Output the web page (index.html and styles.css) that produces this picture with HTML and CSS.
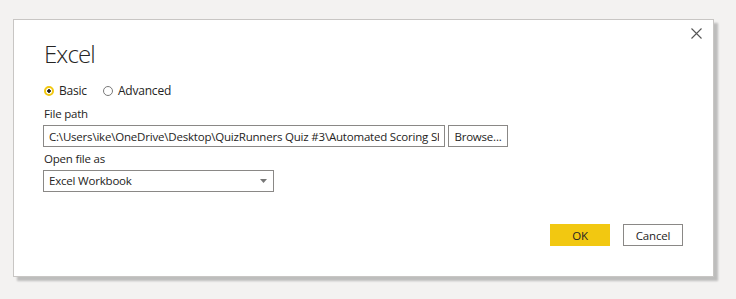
FILE: index.html
```html
<!DOCTYPE html>
<html>
<head>
<meta charset="utf-8">
<link rel="stylesheet" href="styles.css">
</head>
<body>
<div class="dialog">
  <div class="header">
    <h1 class="title">Excel</h1>
    <button class="close" aria-label="Close">
      <svg width="11" height="11" viewBox="0 0 11 11"><path d="M0.5 0.5L10.5 10.5M10.5 0.5L0.5 10.5" stroke="#555" stroke-width="1.1" fill="none"/></svg>
    </button>
  </div>
  <div class="radios">
    <label class="radio"><span class="dot checked"></span>Basic</label>
    <label class="radio"><span class="dot"></span>Advanced</label>
  </div>
  <div class="field">
    <div class="label">File path</div>
    <div class="row">
      <input class="input path" type="text" readonly value="C:\Users\ike\OneDrive\Desktop\QuizRunners Quiz #3\Automated Scoring Sheet.xlsx">
      <button class="btn browse">Browse...</button>
    </div>
  </div>
  <div class="field">
    <div class="label">Open file as</div>
    <div class="input select">
      <span>Excel Workbook</span>
      <svg width="7" height="4" viewBox="0 0 7 4"><path d="M0 0H7L3.5 4Z" fill="#777"/></svg>
    </div>
  </div>
  <div class="footer">
    <button class="btn ok">OK</button>
    <button class="btn cancel">Cancel</button>
  </div>
</div>
</body>
</html>
```
FILE: styles.css
```css
html, body {
  margin: 0;
  padding: 0;
}
body {
  background: #f3f2f1;
  font-family: "Segoe UI", "Open Sans", "Liberation Sans", sans-serif;
  font-size: 11.5px;
  letter-spacing: -0.2px;
  color: #252423;
  width: 736px;
  height: 299px;
  overflow: hidden;
}
.dialog {
  margin: 19px 0 0 13px;
  width: 701px;
  height: 258px;
  background: #fff;
  border: 1px solid #c8c6c4;
  box-shadow: 4px 4px 2px rgba(0,0,0,0.22);
  padding: 0 30px 0 29px;
  box-sizing: border-box;
  display: flex;
  flex-direction: column;
}
.header {
  display: flex;
  justify-content: space-between;
  align-items: flex-start;
  margin-right: -19px;
}
.title {
  margin: 18px 0 0 1px;
  font-family: "Open Sans", sans-serif;
  font-weight: 300;
  font-size: 24px;
  letter-spacing: -0.9px;
  line-height: 32px;
  color: #252423;
}
.close {
  margin-top: 8px;
  border: 0;
  background: none;
  padding: 0;
  width: 11px;
  height: 11px;
  display: flex;
}
.radios {
  display: flex;
  gap: 16px;
  margin: 13px 0 3px 1px;
}
.radio {
  display: flex;
  align-items: center;
  gap: 5px;
  line-height: 16px;
  font-size: 12px;
}
.dot {
  width: 10px;
  height: 10px;
  border-radius: 50%;
  border: 1.5px solid #7a7a7a;
  box-sizing: border-box;
}
.dot.checked {
  border: 2px solid #f2c811;
  background: radial-gradient(circle, #252423 0 1.5px, #fff 2px);
}
.field {
  margin-top: 4px;
}
.label {
  margin-left: 1px;
  line-height: 16px;
  margin-bottom: 3px;
}
.row {
  display: flex;
  gap: 3px;
}
.input {
  height: 22px;
  border: 1px solid #8a8886;
  box-sizing: border-box;
  padding: 0 5px;
  line-height: 20px;
  white-space: nowrap;
  overflow: hidden;
  font-family: inherit;
  font-size: inherit;
  letter-spacing: inherit;
  color: inherit;
  margin: 0;
  background: #fff;
  outline: none;
}
.path {
  width: 402px;
}
.select {
  width: 231px;
  display: flex;
  justify-content: space-between;
  align-items: center;
  padding-right: 6px;
}
.btn {
  font-family: inherit;
  font-size: 11.5px;
  letter-spacing: -0.2px;
  color: #252423;
  height: 22px;
  width: 60px;
  border: 1px solid #8a8886;
  background: #fff;
  padding: 0;
  box-sizing: border-box;
  white-space: nowrap;
}
.footer {
  display: flex;
  justify-content: flex-end;
  gap: 13px;
  margin-top: 32px;
}
.ok {
  background: #f2c811;
  border-color: #f2c811;
}
```
